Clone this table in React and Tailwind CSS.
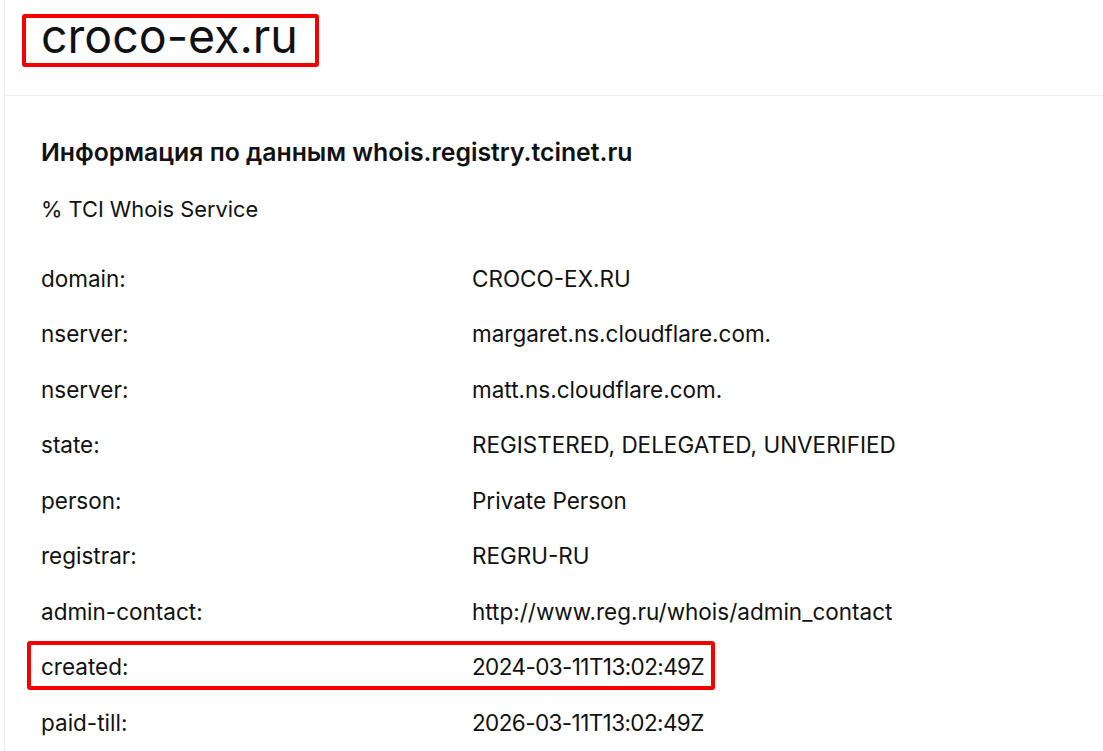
export default function App() {
  const rows = [
    ["domain:", "CROCO-EX.RU"],
    ["nserver:", "margaret.ns.cloudflare.com."],
    ["nserver:", "matt.ns.cloudflare.com."],
    ["state:", "REGISTERED, DELEGATED, UNVERIFIED"],
    ["person:", "Private Person"],
    ["registrar:", "REGRU-RU"],
    ["admin-contact:", "http://www.reg.ru/whois/admin_contact"],
    ["created:", "2024-03-11T13:02:49Z", true, true],
    ["paid-till:", "2026-03-11T13:02:49Z", false, true],
  ];
  return (
    <div className="w-[1103px] h-[751px] overflow-hidden bg-white text-[#111]" style={{ fontFamily: 'Inter, "Liberation Sans", Arial, sans-serif' }}>
      <div className="ml-[4px] h-full border-l border-[#e6eeee]">
        <div className="h-[96px] border-b border-[#e6eeee] pl-[17px] pt-[14px]">
          <div className="inline-flex h-[53px] w-[297px] items-center rounded-[3px] border-[4px] border-[#f50000] pl-[15px]">
            <span className="relative top-[-4px] text-[46.5px] leading-none">croco-ex.ru</span>
          </div>
        </div>
        <div className="pl-[36px]">
          <h2 className="mt-[40px] text-[24.8px] font-semibold leading-[32px]">Информация по данным whois.registry.tcinet.ru</h2>
          <p className="mt-[25px] text-[21.8px] leading-[32px]">% TCI Whois Service</p>
          <div className="mt-[26px]">
            {rows.map(([k, v, hl, date], i) => (
              <div key={i} className="relative flex h-[55.5px] items-center text-[22.5px]">
                {hl && (
                  <div className="absolute left-[-14px] top-[1px] h-[49px] w-[688px] rounded-[3px] border-[4px] border-[#f50000]" />
                )}
                <div className="w-[431px]">{k}</div>
                <div className={date ? "tracking-[-0.6px]" : ""}>{v}</div>
              </div>
            ))}
          </div>
        </div>
      </div>
    </div>
  );
}
